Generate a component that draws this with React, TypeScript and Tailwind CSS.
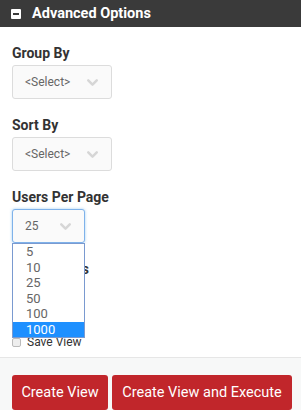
import { ChevronDown } from "lucide-react";

const font = { fontFamily: "Roboto, 'Liberation Sans', sans-serif" };

function FakeSelect({ value, focused, width }: { value: string; focused?: boolean; width: string }) {
  return (
    <div
      className={`flex h-[34px] ${width} items-center justify-between rounded-[3px] border bg-[#fafafa] pl-[12px] pr-[10px] text-[12px] text-[#666] ${
        focused ? "border-[#7fb2ea] shadow-[0_0_3px_rgba(102,175,233,0.6)]" : "border-[#dcdcdc]"
      }`}
    >
      <span>{value}</span>
      <ChevronDown size={17} strokeWidth={3.5} className="text-[#d6d6d6]" />
    </div>
  );
}

const perPage = ["5", "10", "25", "50", "100", "1000"];

export default function App() {
  return (
    <div style={font} className="w-[301px] h-[418px] bg-white overflow-hidden">
      <div className="flex h-[27px] items-center gap-[11px] bg-[#3a3a3a] pl-[11px]">
        <span className="flex h-[10px] w-[10px] items-center justify-center rounded-[1px] bg-white">
          <span className="h-[2px] w-[6px] bg-[#3a3a3a]" />
        </span>
        <span className="text-[14.5px] font-bold text-white">Advanced Options</span>
      </div>

      <div className="h-[331px] border-b border-[#e6e6e6] px-[12px] pt-[17px]">
        <div className="text-[14px] font-bold leading-[18px] text-[#333] mb-[3px]">Group By</div>
        <FakeSelect value="<Select>" width="w-[100px]" />

        <div className="mt-[17px] text-[14px] font-bold leading-[18px] text-[#333] mb-[3px]">Sort By</div>
        <FakeSelect value="<Select>" width="w-[100px]" />

        <div className="mt-[17px] text-[14px] font-bold leading-[18px] text-[#333] mb-[3px]">Users Per Page</div>
        <div className="relative">
          <FakeSelect value="25" focused width="w-[73px]" />
          <ul className="absolute left-0 top-[34px] z-10 w-[73px] border border-[#7a9ad0] bg-white text-[13px] text-[#666]">
            {perPage.map((n) => (
              <li
                key={n}
                className={`h-[15.5px] leading-[15.5px] pl-[13px] ${n === "1000" ? "bg-[#1e90ff] text-white" : ""}`}
              >
                {n}
              </li>
            ))}
          </ul>
        </div>

        <div className="mt-[17px] text-[14px] font-bold leading-[18px] text-[#333]">Grid Results</div>
        <label className="mt-[54px] flex h-[20px] items-center gap-[6px] text-[12px] text-[#333]">
          <span className="h-[9px] w-[9px] rounded-[2px] border border-[#bbb] bg-[#eee]" />
          Save View
        </label>
      </div>

      <div className="flex gap-[4px] bg-[#f7f8f8] px-[12px] pt-[17px]">
        <button className="h-[35px] w-[96px] shrink-0 whitespace-nowrap rounded-[3px] bg-[#c1262b] text-[14.5px] text-white">
          Create View
        </button>
        <button className="h-[35px] w-[180px] shrink-0 whitespace-nowrap rounded-[3px] bg-[#c1262b] text-[14.5px] text-white">
          Create View and Execute
        </button>
      </div>
    </div>
  );
}
